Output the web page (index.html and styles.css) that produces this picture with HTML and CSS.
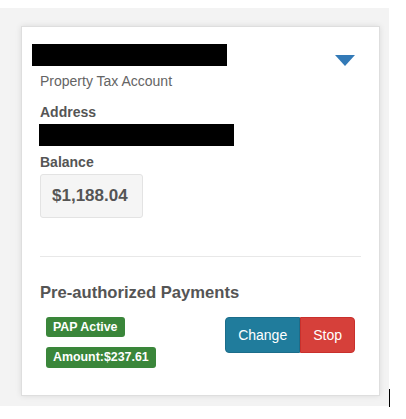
FILE: index.html
```html
<!DOCTYPE html>
<html>
<head>
<meta charset="utf-8">
<link rel="stylesheet" href="styles.css">
</head>
<body>
<div class="panel">
  <div class="card">
    <div class="header">
      <div class="header-main">
        <div class="redact redact-title"></div>
        <div class="subtitle">Property Tax Account</div>
      </div>
      <div class="caret"></div>
    </div>
    <div class="label label-address">Address</div>
    <div class="redact redact-address"></div>
    <div class="label label-balance">Balance</div>
    <div class="balance">$1,188.04</div>
    <div class="divider"></div>
    <div class="section-title">Pre-authorized Payments</div>
    <div class="pap-row">
      <div class="badges">
        <span class="badge">PAP Active</span>
        <span class="badge">Amount:$237.61</span>
      </div>
      <div class="btn-group">
        <button class="btn btn-change">Change</button>
        <button class="btn btn-stop">Stop</button>
      </div>
    </div>
  </div>
</div>
<div class="cursor"></div>
</body>
</html>
```

FILE: styles.css
```css
html, body {
  margin: 0;
  padding: 0;
  background: #ffffff;
  font-family: "Liberation Sans", Arial, sans-serif;
}

.panel {
  margin-top: 8px;
  width: 389px;
  box-sizing: border-box;
  padding: 18px 9px 10px 21px;
  background: #f3f3f3;
}

.card {
  box-sizing: border-box;
  width: 359px;
  background: #ffffff;
  border: 1px solid #dedede;
  box-shadow: 0 0 6px rgba(0, 0, 0, 0.10);
  padding: 17px 18px 27px 18px;
}

.header {
  display: flex;
  justify-content: space-between;
  align-items: flex-start;
}

.redact {
  background: #000000;
  height: 22px;
  width: 195px;
}

.redact-title {
  margin-left: -8px;
}

.subtitle {
  margin-top: 5px;
  font-size: 14px;
  line-height: 20px;
  color: #646464;
}

.caret {
  margin-top: 11px;
  margin-right: 6px;
  width: 0;
  height: 0;
  border-left: 10px solid transparent;
  border-right: 10px solid transparent;
  border-top: 11px solid #337ab7;
}

.label {
  font-size: 14px;
  line-height: 20px;
  font-weight: bold;
  color: #555555;
}

.label-address {
  margin-top: 11px;
}

.redact-address {
  margin-top: 2px;
  margin-left: -1px;
}

.label-balance {
  margin-top: 6px;
}

.balance {
  margin-top: 2px;
  box-sizing: border-box;
  width: 103px;
  height: 44px;
  display: flex;
  align-items: center;
  padding-left: 11px;
  background: #f5f5f5;
  border: 1px solid #e3e3e3;
  border-radius: 3px;
  font-size: 17px;
  font-weight: bold;
  color: #555555;
}

.divider {
  margin-top: 38px;
  height: 1px;
  background: #e8e8e8;
}

.section-title {
  margin-top: 24px;
  font-size: 16.6px;
  line-height: 24px;
  font-weight: bold;
  color: #555555;
}

.pap-row {
  margin-top: 12px;
  display: flex;
  justify-content: space-between;
  align-items: flex-start;
}

.badges {
  margin-left: 6px;
  display: flex;
  flex-direction: column;
  align-items: flex-start;
  gap: 10px;
}

.badge {
  display: inline-block;
  background: #3a863a;
  color: #ffffff;
  font-size: 12.4px;
  font-weight: bold;
  line-height: 20px;
  height: 20px;
  padding: 0 7px;
  border-radius: 3px;
}

.badge + .badge {
  height: 21px;
  line-height: 21px;
}

.btn-group {
  margin-right: 6px;
  display: flex;
}

.btn {
  font-family: "Liberation Sans", Arial, sans-serif;
  font-size: 14px;
  line-height: 20px;
  padding: 7px 12px;
  color: #ffffff;
  border: 1px solid transparent;
  margin: 0;
}

.btn-change {
  background: #207c9c;
  border-color: #1c6d8a;
  border-radius: 4px 0 0 4px;
}

.btn-stop {
  background: #d6403a;
  border-color: #c9302c;
  border-radius: 0 4px 4px 0;
}

.cursor {
  position: absolute;
  left: 389px;
  top: 389px;
  width: 1px;
  height: 18px;
  background: #000000;
}
```
